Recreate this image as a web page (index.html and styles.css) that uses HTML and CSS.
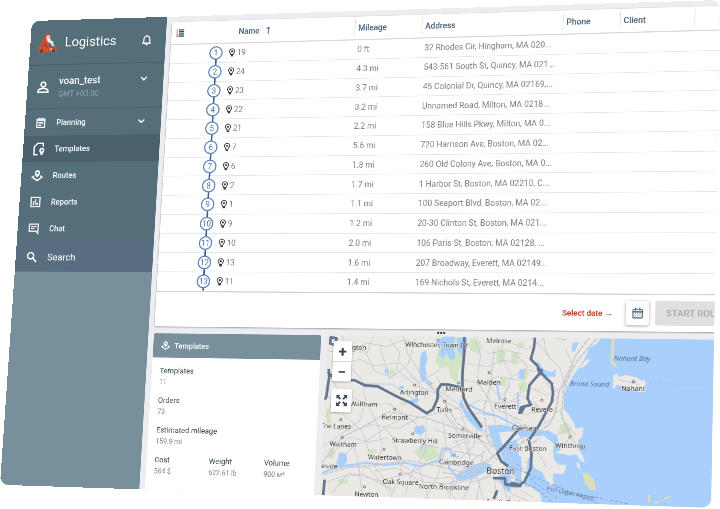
FILE: index.html
```html
<!DOCTYPE html>
<html lang="en">
<head>
  <meta charset="UTF-8">
  <meta name="viewport" content="width=device-width, initial-scale=1">
  <title>Logistics</title>
  <link rel="stylesheet" href="styles.css">
</head>
<body>
  <!-- icons -->
  <svg class="sprite" aria-hidden="true">
    <symbol id="i-chevron" viewBox="0 0 24 24"><path d="M4 8l8 8 8-8" fill="none" stroke="currentColor" stroke-width="3.600"/></symbol>
    <symbol id="i-bell" viewBox="0 0 24 24"><path d="M12 2.500v2M6 18v-7.500a6 6 0 0 1 12 0V18M3.500 18.500h17" fill="none" stroke="currentColor" stroke-width="2.400"/><path d="M9.500 20.500h5a2.500 2.500 0 0 1-5 0z" fill="currentColor"/></symbol>
    <symbol id="i-person" viewBox="0 0 24 24"><circle cx="12" cy="7.500" r="4" fill="none" stroke="currentColor" stroke-width="2.800"/><path d="M3.500 20.500v-2.500c0-2.500 4.500-4 8.500-4s8.500 1.500 8.500 4v2.500z" fill="none" stroke="currentColor" stroke-width="2.800"/></symbol>
    <symbol id="i-plan" viewBox="0 0 24 24"><path d="M4 5h16v16.500H4z" fill="none" stroke="currentColor" stroke-width="2.400"/><path d="M4 7.500h16M8 2v4M12 2v4M16 2v4M7 11.500h10M7 14.500h10M7 17.500h6" fill="none" stroke="currentColor" stroke-width="2"/></symbol>
    <symbol id="i-template" viewBox="0 0 24 24"><path d="M10 21.500H3.500V8L9 2.500h10V8" fill="none" stroke="currentColor" stroke-width="2.400"/><path d="M17 10a4.500 4.500 0 0 1 4.500 4.500c0 2.500-2 3.500-2.500 5.500v2h-4v-2c-.5-2-2.500-3-2.500-5.500A4.500 4.500 0 0 1 17 10zm0 2.800a1.700 1.700 0 1 0 0 3.400 1.700 1.700 0 0 0 0-3.400z" fill="currentColor"/></symbol>
    <symbol id="i-route" viewBox="0 0 24 24"><path d="M12 1.500a5.500 5.500 0 0 1 5.500 5.500c0 4-5.500 9-5.500 9S6.500 11 6.500 7A5.500 5.500 0 0 1 12 1.500zm0 3.300a2.200 2.200 0 1 0 0 4.400 2.200 2.200 0 0 0 0-4.400z" fill="currentColor"/><path d="M6 12.500L2 15.500l10 6.500 10-6.500-4-3" fill="none" stroke="currentColor" stroke-width="2.800"/></symbol>
    <symbol id="i-report" viewBox="0 0 24 24"><path d="M3 3h18v18H3z" fill="none" stroke="currentColor" stroke-width="2.400"/><path d="M8 10v8M16 13v5" stroke="currentColor" stroke-width="2.800"/><path d="M12 6v12" stroke="#e6e08a" stroke-width="2.800"/></symbol>
    <symbol id="i-chat" viewBox="0 0 24 24"><path d="M3 3h18v18.500L17 17H3z" fill="none" stroke="currentColor" stroke-width="2.400"/><path d="M6.500 8h11M6.500 12h7" stroke="currentColor" stroke-width="2.200"/></symbol>
    <symbol id="i-search" viewBox="0 0 24 24"><circle cx="9.500" cy="9.500" r="6.200" fill="none" stroke="currentColor" stroke-width="2.800"/><path d="M14 14l7.500 7.500" stroke="currentColor" stroke-width="3.200"/></symbol>
    <symbol id="i-list" viewBox="0 0 16 16"><path d="M1 2.500h3M1 6.200h3M1 9.900h3M1 13.600h3" stroke="#c0736a" stroke-width="2.200"/><path d="M5 2.500h10M5 6.200h10M5 9.900h10M5 13.600h10" stroke="#37474f" stroke-width="2.200"/></symbol>
    <symbol id="i-sort" viewBox="0 0 10 16"><path d="M5 15V2M2 5l3-3 3 3" fill="none" stroke="currentColor" stroke-width="1.800"/></symbol>
    <symbol id="i-pin" viewBox="0 0 12 16"><path d="M6 1.200a4.600 4.600 0 0 1 4.600 4.600c0 2.400-2.300 3.400-2.600 6H4c-.3-2.600-2.600-3.600-2.600-6A4.600 4.600 0 0 1 6 1.200z" fill="none" stroke="currentColor" stroke-width="1.500"/><circle cx="6" cy="5.800" r="1.900" fill="currentColor"/><path d="M4 13.900h4" stroke="currentColor" stroke-width="2.400"/></symbol>
    <symbol id="i-calendar" viewBox="0 0 24 24"><rect x="3" y="4.500" width="18" height="17" rx="2" fill="none" stroke="currentColor" stroke-width="2"/><path d="M3 9.500h18M8 1.500v5M16 1.500v5" stroke="currentColor" stroke-width="2.400"/><path d="M6.500 13.500h11M6.500 17.500h11" stroke="currentColor" stroke-width="1.800" stroke-dasharray="2 2.500"/></symbol>
    <symbol id="i-expand" viewBox="0 0 24 24"><path d="M2 2h7L6.700 4.300l4 4-2.400 2.400-4-4L2 9zM22 2v7l-2.300-2.300-4 4-2.400-2.400 4-4L15 2zM2 22v-7l2.300 2.300 4-4 2.400 2.400-4 4L9 22zM22 22h-7l2.300-2.300-4-4 2.400-2.400 4 4L22 15z" fill="currentColor"/></symbol>
  </svg>

  <div class="stage">
  <div class="app">
    <aside class="sidebar">
      <header class="brand">
        <svg class="brand-logo" viewBox="0 0 36 36" aria-hidden="true">
          <path d="M1 32l1-8 3-3 2-7 3-5 6 1 3 4 2 9 1 7 5-1 4-5 4 2 1 7-3 3H2z" fill="#cc5233"/>
          <path d="M10 4l7-3 6 3-1 4-10 2z" fill="#c64a32"/>
          <circle cx="18" cy="8" r="4" fill="#e9c3ae"/>
          <path d="M15 11l6-1 4 5 4 2-1 3 3 4-4 1-4-6-5-2z" fill="#e9edf0"/>
          <path d="M5 24h10M10 16l8 11" stroke="#a93c27" stroke-width="2"/>
          <circle cx="7" cy="33" r="3" fill="#7c3428"/><circle cx="30" cy="33" r="3" fill="#7c3428"/>
          <circle cx="25" cy="30" r="2" fill="#d8d860"/>
        </svg>
        <span class="brand-name">Logistics</span>
        <button class="icon-btn" aria-label="Notifications"><svg class="icon"><use href="#i-bell"/></svg></button>
      </header>
      <div class="user">
        <svg class="icon icon-lg"><use href="#i-person"/></svg>
        <div class="user-info">
          <div class="user-name">voan_test</div>
          <div class="user-zone">GMT +03:00</div>
        </div>
        <button class="icon-btn user-toggle" aria-label="Account menu"><svg class="icon icon-sm"><use href="#i-chevron"/></svg></button>
      </div>
      <nav class="menu">
        <a class="menu-item" href="#"><svg class="icon"><use href="#i-plan"/></svg><span>Planning</span><svg class="icon icon-sm menu-arrow"><use href="#i-chevron"/></svg></a>
        <a class="menu-item active" href="#"><svg class="icon icon-lg"><use href="#i-template"/></svg><span>Templates</span></a>
        <a class="menu-item" href="#"><svg class="icon"><use href="#i-route"/></svg><span>Routes</span></a>
        <a class="menu-item" href="#"><svg class="icon"><use href="#i-report"/></svg><span>Reports</span></a>
        <a class="menu-item" href="#"><svg class="icon"><use href="#i-chat"/></svg><span>Chat</span></a>
        <a class="menu-item search" href="#"><svg class="icon"><use href="#i-search"/></svg><span>Search</span></a>
      </nav>
    </aside>

    <main class="main">
      <section class="orders">
        <table class="orders-table">
          <colgroup>
            <col class="col-name"><col class="col-mileage"><col class="col-address"><col class="col-phone"><col class="col-client"><col>
          </colgroup>
          <thead>
            <tr>
              <th><div class="name-head"><svg class="list-icon"><use href="#i-list"/></svg><span>Name</span><svg class="sort"><use href="#i-sort"/></svg></div></th>
              <th>Mileage</th>
              <th>Address</th>
              <th>Phone</th>
              <th>Client</th>
              <th></th>
            </tr>
          </thead>
          <tbody>
            <tr><td><div class="stop"><span class="num">1</span><svg class="pin"><use href="#i-pin"/></svg>19</div></td><td>0 ft</td><td>32 Rhodes Cir, Hingham, MA 020...</td><td></td><td></td><td></td></tr>
            <tr><td><div class="stop"><span class="num">2</span><svg class="pin"><use href="#i-pin"/></svg>24</div></td><td>4.3 mi</td><td>543-561 South St, Quincy, MA 021...</td><td></td><td></td><td></td></tr>
            <tr><td><div class="stop"><span class="num">3</span><svg class="pin"><use href="#i-pin"/></svg>23</div></td><td>3.7 mi</td><td>45 Colonial Dr, Quincy, MA 02169,...</td><td></td><td></td><td></td></tr>
            <tr><td><div class="stop"><span class="num">4</span><svg class="pin"><use href="#i-pin"/></svg>22</div></td><td>3.2 mi</td><td>Unnamed Road, Milton, MA 0218...</td><td></td><td></td><td></td></tr>
            <tr><td><div class="stop"><span class="num">5</span><svg class="pin"><use href="#i-pin"/></svg>21</div></td><td>2.2 mi</td><td>158 Blue Hills Pkwy, Milton, MA 0...</td><td></td><td></td><td></td></tr>
            <tr><td><div class="stop"><span class="num">6</span><svg class="pin"><use href="#i-pin"/></svg>7</div></td><td>5.6 mi</td><td>720 Harrison Ave, Boston, MA 02...</td><td></td><td></td><td></td></tr>
            <tr><td><div class="stop"><span class="num">7</span><svg class="pin"><use href="#i-pin"/></svg>6</div></td><td>1.8 mi</td><td>260 Old Colony Ave, Boston, MA 0...</td><td></td><td></td><td></td></tr>
            <tr><td><div class="stop"><span class="num">8</span><svg class="pin"><use href="#i-pin"/></svg>2</div></td><td>1.7 mi</td><td>1 Harbor St, Boston, MA 02210, C...</td><td></td><td></td><td></td></tr>
            <tr><td><div class="stop"><span class="num">9</span><svg class="pin"><use href="#i-pin"/></svg>1</div></td><td>1.1 mi</td><td>100 Seaport Blvd, Boston, MA 02...</td><td></td><td></td><td></td></tr>
            <tr><td><div class="stop"><span class="num">10</span><svg class="pin"><use href="#i-pin"/></svg>9</div></td><td>1.2 mi</td><td>20-30 Clinton St, Boston, MA 021...</td><td></td><td></td><td></td></tr>
            <tr><td><div class="stop"><span class="num">11</span><svg class="pin"><use href="#i-pin"/></svg>10</div></td><td>2.0 mi</td><td>106 Paris St, Boston, MA 02128, ...</td><td></td><td></td><td></td></tr>
            <tr><td><div class="stop"><span class="num">12</span><svg class="pin"><use href="#i-pin"/></svg>13</div></td><td>1.6 mi</td><td>207 Broadway, Everett, MA 02149...</td><td></td><td></td><td></td></tr>
            <tr><td><div class="stop"><span class="num">13</span><svg class="pin"><use href="#i-pin"/></svg>11</div></td><td>1.4 mi</td><td>169 Nichols St, Everett, MA 0214...</td><td></td><td></td><td></td></tr>
          </tbody>
        </table>
        <footer class="orders-footer">
          <span class="hint">Select date →</span>
          <button class="date-btn" aria-label="Select date"><svg class="icon"><use href="#i-calendar"/></svg></button>
          <button class="start-btn" disabled>START ROUTE</button>
        </footer>
      </section>

      <div class="splitter"><i></i><i></i><i></i></div>

      <div class="bottom">
        <section class="card">
          <h2 class="card-title"><svg class="icon icon-sm"><use href="#i-route"/></svg>Templates</h2>
          <dl class="stats">
            <div class="wide"><dt>Templates</dt><dd>11</dd></div>
            <div class="wide"><dt>Orders</dt><dd>73</dd></div>
            <div class="wide"><dt>Estimated mileage</dt><dd>159.9 mi</dd></div>
            <div><dt>Cost</dt><dd>564 $</dd></div>
            <div><dt>Weight</dt><dd>622.61 lb</dd></div>
            <div><dt>Volume</dt><dd>900 м³</dd></div>
          </dl>
        </section>

        <section class="map">
          <svg class="map-canvas" viewBox="0 0 700 270" preserveAspectRatio="xMinYMin slice" role="img" aria-label="Map of Boston">
            <!-- west side -->
            <g transform="matrix(.56 -.004 .0167 .547 -27.7 -25)">
              <g class="park">
                <path d="M415 50l50 0-5 40 5 40-20 20-5 40-20-20-5-30-25 5-15-20 10-40 15-5z"/>
                <path d="M480 55l25 5 10 20-10 20-20-5-10-20zM560 75l25 20-5 30-15 10-10-20zM600 95l20 0 0 40-20-5zM330 110l10-5 0 70-10 5zM240 150l15 0 0 20-15-2zM150 85l20 5-5 12-20-2zM50 270l15 20 0 30-15 0zM330 385l40-10 15 20-15 22-40 2-15-20zM60 395l20 5-5 25-20-5zM570 165l20 10-5 25-20-5z"/>
                <path d="M270 250l20-5 10 12-20 5zM175 395l25 0 5 10-25 4zM85 490l30-5 5 15-30 5zM340 420l50-20 10 12-50 18z"/>
              </g>
              <g class="water">
                <path d="M335 98l12-6 6 22-6 28 4 40-14 8-8-30 2-40z"/>
                <path d="M380 60l25-12 30 0-6 30 8 35-14 10-14-25-10 20-12-14 8-25-15-5zM440 52l30 0 0 28-14 30-14-20z"/>
                <path d="M300 245l25-10 5 10-25 14zM315 325l28-6 6 18-16 12-18-6zM225 150l12 0 0 14-12-2zM90 405l22 5 4 22-20 26-12-16zM452 235l12 30 30 30 24 34-8 8-36-34-26-48z"/>
                <path d="M440 470l40-30 40-14 26 10-18 20-40 20-48 8zM530 318l40-4 60 10 0 12-40-2-25 4 10 40-12 20-16-30zM575 372l55-20v50l-40 22-18-16zM560 470l20-10 50 0 0 60-40-6-20-24zM570 395l60 0 0 70-40 0z"/>
                <path d="M350 180l20 10-6 10-18-10zM270 200l14 2-2 10-14-2z"/>
              </g>
              <path class="river" d="M40 470l50-20 80-14 60 6 60-8 40 10 60-20 10-36 20 0 8 22 20 4M345 370l-12 24M440 470l-18-20-10-30M465 250l60 30 30 6 80 40M555 180l12 60M620 215l0 50"/>
              <g class="street">
                <path d="M50 95l60 5 60-30 60 10 50-20 90 20M95 45l20 90 50 60 80 0 60 40 40 45M190 45l-20 60 25 50 50 20 50-40 20-80M50 240l60-10 70 30 60-5 80 60 30 70M160 200l10 50-20 60-80 60-35 20M110 130l40-10 40 20 80-10 50 50 30 60M240 60l30 40-10 50 60 50 80 30M280 45l15 60 60 90 80 50 60 50 50 90"/>
                <path d="M50 330l70 10 70-20 80 10 50-30 70-20 80-20M60 420l60-60 50 10 60-40 30 40 60 0 80 20 120 20M180 270l30 60 10 60-20 60 40 50 10 40M130 370l20 70 10 90M45 500l80-30 90 20 100-30 60 20 80-10M250 420l60 40 60-30 80 10M70 530l40-50 50-10 100 50M290 530l20-70 40-60 0-100M350 540l40-80 20-80-10-80M420 540l10-60 60-60 40-30M460 540l30-70 60-60M500 540l10-60 50-30M200 460l60-10 80 40 90 5 70-20"/>
                <path d="M470 130l60 10 40-20 60 5M490 45l20 60-10 80 40 60 20 90M580 45l-10 60 30 60-20 70 10 90M460 180l50 10 50-20 70 10M470 260l40-20 60 10 60-10M530 100l60-10 40 10M440 300l60-20 60 10M380 170l30 60 0 60 40 60M390 150l-60 40-30-20M410 250l40 20 20 60 10 80"/>
                <path d="M430 370l60-20 60 30M400 400l60-30 70 0M450 420l40-40 10-50M370 330l60 20 30 50M480 420l-20-80-60-60M520 390l-10 60-40 30-50 10M480 490l60-20 40 20M520 540l-20-70M560 540l-10-80M590 540l-20-70M600 190l-40 60M540 200l50 60 40 10M50 150l30 60-30 90M210 80l30 100M100 290l60 50 20 60M300 290l-80 40M260 380l20 80-30 70M330 450l30 90M120 450l60 0 60 70M390 490l50 50M80 440l60-60 100-20"/>
              </g>
              <path class="rail" d="M38 440l60-80 60-30 80-50 120 20 90 30 70 20M45 475l80-26 70-6 100-16 90 14 80 20M350 190l50 50 40 70 60 40 60 70M550 90l-10 100-20 80 10 80 40 60M560 270l70 30M520 330l60 60 50 90M400 460l60 10 100-70M430 430l60 20 70 0"/>
              <g class="highway">
                <path d="M55 150l2 25-8 60-4 10M52 160l18 18 35 6 28 0 32 16 40 3 30 16 35 18 32 14 50 32 18-12 14-34 0-26 10-16 20 0 40 8M462 45l0 50-5 60 0 50 4 30 14 30 40 58M48 490l-4 50"/>
                <path d="M630 320l-14 14-36 44-20 22 12 24 20 14M548 474l34 0 2 18 46 6M560 510l-10 26M640 255l-12 25"/>
                <path d="M60 52l18 4-6 20-14-4z"/>
              </g>
            </g>
            <!-- east side -->
            <g transform="matrix(.53 -.0035 .0167 .537 307.300 -28.500)">
              <g class="park">
                <path d="M15 75l20-10 8 12-16 14zM30 160l20-6 8 10-14 22-20-2zM22 195l26-6 4 24-24 8zM150 320l20-8 18 16-10 20-30 0z"/>
              </g>
              <path class="water" d="M285 44L262 72l-22 12-6 16-10 22-14 20-22 34-14 22-10 26-2 46 18 22 12 20 6 18 24-4-4 28-12 12 0 26 12 18 8 22-14-4-12-20-20 4-24-8-10-30-4-22-26-14-30 0-20 18 34-4 28 22 4 52 16 14 22 0-6 24-32-6-4 26 6 20-16-4-20-36-22-10-22-40-4 40-4 50-20 24-30 12v24l60 4 40 12 10 40 700 60V30z"/>
              <g class="land">
                <path d="M312 168l12-6 6 10 20-6 30 6 16 10 12 0 0 34-24 0-30-12-30-8-12 14zM20 370l34-18 40 6 20 14-34 30-14 22-40-8zM66 380l26 18 28-26 12 6-8 60 38 4-2 26-34-2-4 26-8 6-24-46-24-24zM0 514l60-6 30 20 6 30-96 6zM0 470l16 10-6 16-10 0zM140 402l20-8 30 6-4 10-44-4zM200 428l10 10 0 16-8-8zM232 118l12 2-16 20-20 8z"/>
              </g>
              <path class="sand" d="M308 46l10 0-2 40-4 40 12 8-4 8-16-10zM218 462l22 4 14 20 4 28-16 0-18-22zM413 524l8 0-2 22-6 0zM434 542l14 2-6 6-12-2zM460 532l16-6 4 4-20 8z"/>
              <path class="water" d="M80 120l20 30 26 10 14-12-4 26-20 0-30-14zM190 70l20-4-14 30-10 0zM20 345l40-14 50 10-20 14-60 6zM28 150l16 4-6 26-14 0z"/>
              <g class="street">
                <path d="M0 70l50 20 60-40 60 10M0 180l40-30 50 10 40 60M100 45l10 60 40 40 20 60M10 230l60-20 40 20 40-20M0 250l30-20 60 40 60 10M40 290l60-10 40-40M150 270l20 60 30 50M0 340l40-20 40 10 50-30 10-40M10 100l40 40-20 80M140 350l40-20 20 20M60 380l30-20M160 380l30-30M20 400l60-30M40 430l30 20M75 250l30 60M170 90l20 50-30 60"/>
                <path d="M0 300l30 20 10 50M60 50l60 60M30 520l40 20M0 530l50 20M110 450l-30-50M326 180l50 10 20 12"/>
              </g>
              <path class="rail wide" d="M242 50l-44 60-50 110-10 60-20 40-60 40-58 40M262 56l-60 70-40 80-6 90 30 60"/>
              <path class="ferry" d="M0 450l90 34 80 36 140 24 50 10M20 440l60 60 60 40M0 480l80 34 50 44M130 500l140 56"/>
              <path class="ferry light" d="M418 190l200 4"/>
              <g class="highway">
                <path d="M76 44l-4 40-10 36 20 20 10 20-34 40-6 40 10 20-30 8-6 20M92 160l34 34 4 30-4 26-40 74-30 44 8 40-2 44-20 42-14 10-28-6"/>
                <path d="M84 150l12 4-4 12z"/>
              </g>
            </g>

            <g class="dots">
              <circle cx="188" cy="6" r="2"/><circle cx="275" cy="59" r="2"/><circle cx="225" cy="77" r="2"/><circle cx="152" cy="82" r="2"/><circle cx="302" cy="103" r="2"/><circle cx="203" cy="108" r="2"/><circle cx="120" cy="123" r="2"/><circle cx="235" cy="153" r="2"/><circle cx="34" cy="172" r="2"/><circle cx="152" cy="163" r="2"/><circle cx="105" cy="190" r="2"/><circle cx="222" cy="196" r="2"/><circle cx="30" cy="142" r="2"/><circle cx="134" cy="230" r="2"/><circle cx="362" cy="103" r="2"/><circle cx="343" cy="168" r="2"/><circle cx="409" cy="162" r="2"/><circle cx="508" cy="70" r="2"/><circle cx="75" cy="253" r="2"/>
            </g>
            <g class="labels">
              <text x="186" y="18">Winchester, Town Of</text>
              <text x="289" y="10">Melrose</text>
              <text x="68" y="24" class="end">Lexington</text>
              <text x="275" y="79">Malden</text>
              <text x="226" y="91">Medford</text>
              <text x="152" y="98">Arlington</text>
              <text x="303" y="118">Everett</text>
              <text x="203" y="126">Tufts</text>
              <text x="91" y="119" class="end">Waltham</text>
              <text x="121" y="140">Belmont</text>
              <text x="48" y="157" class="end">The Lanes</text>
              <text x="156" y="178">Strawberry Hill</text>
              <text x="238" y="168">Somerville</text>
              <text x="36" y="187">Waltham</text>
              <text x="107" y="207">Watertown</text>
              <text x="226" y="212">Cambridge</text>
              <text x="28" y="224" class="end">Lakeside</text>
              <text x="299" y="225" class="city">Boston</text>
              <text x="135" y="247">Oak Square</text>
              <text x="207" y="253">North Brookline</text>
              <text x="79" y="269">Newton</text>
              <text x="312" y="275">South Boston</text>
              <text x="335" y="153">Chelsea</text>
              <text x="342" y="186">East Boston</text>
              <text x="363" y="122">Revere</text>
              <text x="410" y="180">Winthrop</text>
              <text x="508" y="85">Nahant</text>
              <text x="505" y="36" class="bay">Nahant Bay</text>
              <text x="438" y="79" class="bay">Broad Sound</text>
              <text x="412" y="256" class="route" transform="rotate(11 412 256)">Hull-Logan Airport</text>
            </g>
          </svg>
          <div class="map-controls">
            <div class="zoom">
              <button aria-label="Zoom in">+</button>
              <button aria-label="Zoom out">−</button>
            </div>
            <button class="expand" aria-label="Fit map"><svg class="icon"><use href="#i-expand"/></svg></button>
          </div>
        </section>
      </div>
    </main>
  </div>
  </div>
</body>
</html>
```

FILE: styles.css
```css
* {
  box-sizing: border-box;
  margin: 0;
  padding: 0;
}

body {
  background: #fff;
  font-family: Roboto, "Liberation Sans", sans-serif;
  font-size: 14px;
  color: #37474f;
}

button {
  border: none;
  background: none;
  font: inherit;
  color: inherit;
  cursor: pointer;
}

.sprite {
  position: absolute;
  width: 0;
  height: 0;
}

.stage {
  height: 100vh;
  overflow: hidden;
}

/* the whole window is shown in perspective */
.app {
  display: flex;
  width: calc(100vw * 5 / 3);
  overflow: hidden;
  border-radius: 15px;
  background: #ecedf1;
  transform-origin: 0 0;
  transform: matrix3d(0.522275, -0.0175, 0, -0.000070917, -0.0384, 0.53735, 0, -0.00004011, 0, 0, 1, 0, 32, 21, 0, 1);
}

.icon {
  display: block;
  flex: none;
  width: 22px;
  height: 22px;
}

.icon-lg {
  width: 26px;
  height: 26px;
}

.icon-sm {
  width: 16px;
  height: 16px;
}

/* sidebar */
.sidebar {
  flex: none;
  width: 253px;
  background: #78909c;
  color: #fff;
}

.brand {
  display: flex;
  align-items: center;
  height: 83px;
  padding: 0 24px 0 15px;
  background: #546e7a;
  border-bottom: 2px solid #4b626e;
}

.brand-logo {
  width: 36px;
  height: 36px;
  margin-right: 14px;
}

.brand-name {
  flex: 1;
  font-size: 24px;
}

.user {
  display: flex;
  align-items: center;
  gap: 16px;
  height: 81px;
  padding: 0 28px 0 17px;
  background: #546e7a;
  border-bottom: 2px solid #4b626e;
}

.user-info {
  flex: 1;
}

.user-name {
  font-size: 18px;
  font-weight: 500;
  line-height: 26px;
}

.user-zone {
  line-height: 22px;
  color: #95a7b0;
}

.user-toggle {
  align-self: flex-start;
  padding-top: 20px;
}

.menu-item {
  display: grid;
  grid-template-columns: 26px 1fr 16px;
  align-items: center;
  justify-items: start;
  column-gap: 16px;
  height: 48px;
  padding: 0 28px 0 17px;
  background: #546e7a;
  color: #fff;
  font-weight: 500;
  text-decoration: none;
}

.menu-item .icon {
  justify-self: center;
}

.menu-item.active {
  background: #4b606d;
}

.menu-item.search {
  height: 53px;
  background: #586d80;
  font-size: 17px;
  font-weight: 400;
}

/* table of stops */
.main {
  flex: none;
  width: calc(100% - 186px);
  padding: 10px 0 0 10px;
}

.orders {
  margin-right: 10px;
  background: #fff;
  border-radius: 3px;
  box-shadow: 0 1px 3px rgba(0, 0, 0, .4);
}

.orders-table {
  width: 100%;
  height: 482px;
  table-layout: fixed;
  border-collapse: collapse;
  border-bottom: 2px solid #d0d3d6;
}

.col-name {
  width: 328px;
}

.col-mileage {
  width: 116px;
}

.col-address {
  width: 238px;
}

.col-phone {
  width: 94px;
}

.col-client {
  width: 121px;
}

.orders-table th {
  height: 41px;
  padding: 0 6px;
  border-bottom: 2px solid #d6d8da;
  font-weight: 500;
  color: #46607a;
  text-align: left;
  background: linear-gradient(#cfd3d6, #cfd3d6) 0 50% / 1px 28px no-repeat;
}

.orders-table th:first-child {
  padding: 0;
  background: none;
}

.name-head {
  display: grid;
  grid-template-columns: 114px 48px auto;
  align-items: center;
  justify-content: start;
  padding-left: 8px;
}

.list-icon {
  width: 16px;
  height: 16px;
}

.sort {
  width: 10px;
  height: 16px;
  color: #6b8292;
}

.orders-table td {
  padding: 0 6px;
  border-bottom: 1px solid #e0e2e4;
  color: #7c8084;
  white-space: nowrap;
}

.stop {
  display: flex;
  align-items: center;
  padding-left: 65px;
}

.num {
  position: relative;
  width: 24px;
  height: 24px;
  margin-right: 11px;
  border: 2px solid #5a82b6;
  border-radius: 50%;
  background: #fff;
  color: #4f78ae;
  line-height: 20px;
  text-align: center;
}

/* link to the next stop */
.num::after {
  content: "";
  position: absolute;
  left: 9px;
  top: 22px;
  width: 3px;
  height: 10px;
  background: #3c5f8d;
}

tr:last-child .num::after {
  height: 4px;
}

.pin {
  width: 12px;
  height: 16px;
  margin-right: 3px;
  color: #333;
}

.orders-footer {
  display: flex;
  align-items: center;
  justify-content: flex-end;
  height: 60px;
  padding: 0 10px;
}

.hint {
  margin-right: 21px;
  font-size: 13px;
  font-weight: 500;
  color: #c62f1c;
}

.date-btn {
  display: grid;
  place-items: center;
  width: 37px;
  height: 40px;
  margin-right: 10px;
  border-radius: 3px;
  background: #fff;
  box-shadow: 0 1px 4px rgba(0, 0, 0, .4);
  color: #455a6e;
}

.date-btn .icon {
  width: 20px;
  height: 20px;
}

.start-btn {
  width: 140px;
  height: 40px;
  padding-left: 17px;
  border-radius: 3px;
  background: #e0e0e0;
  color: #a8a8a8;
  font-size: 15px;
  font-weight: 500;
  text-align: left;
}

.splitter {
  display: flex;
  align-items: center;
  justify-content: center;
  gap: 1px;
  height: 12px;
  margin-right: 10px;
}

.splitter i {
  width: 4px;
  height: 4px;
  border-radius: 50%;
  background: #333;
}

/* summary card */
.bottom {
  display: flex;
  gap: 10px;
}

.card {
  flex: none;
  width: 294px;
  background: #fff;
  border-radius: 3px 3px 0 0;
}

.card-title {
  display: flex;
  align-items: center;
  gap: 8px;
  height: 42px;
  padding: 0 14px;
  border-radius: 3px 3px 0 0;
  background: #78909c;
  color: #fff;
  font-size: 13px;
  font-weight: 500;
}

.stats {
  display: grid;
  grid-template-columns: 96px 96px 1fr;
  row-gap: 13px;
  padding: 13px 0 0 14px;
}

.stats .wide {
  grid-column: 1 / -1;
}

.stats dt {
  font-size: 13px;
  line-height: 20px;
}

.stats dd {
  font-size: 12px;
  line-height: 18px;
  color: #7c8084;
}

/* map */
.map {
  position: relative;
  flex: 1;
  overflow: hidden;
  background: #ebe9e5;
}

.map-canvas {
  display: block;
  width: 100%;
  height: 269px;
}

.park {
  fill: #d2e4c4;
}

.water {
  fill: #a9d0fd;
}

.land {
  fill: #ebe9e5;
}

.sand {
  fill: #d8dfb4;
}

.river {
  fill: none;
  stroke: #a9d0fd;
  stroke-width: 6;
}

.street {
  fill: none;
  stroke: #c4c4cf;
  stroke-width: 2;
  stroke-linejoin: round;
}

.rail {
  fill: none;
  stroke: #c9c9cd;
  stroke-width: 4;
  stroke-dasharray: 14 3;
}

.rail.wide {
  stroke: #c2c6c8;
}

.ferry {
  fill: none;
  stroke: #8197b8;
  stroke-width: 2;
  stroke-dasharray: 9 6;
}

.ferry.light {
  stroke: #9dc0ea;
}

.highway {
  fill: none;
  stroke: #64768f;
  stroke-width: 8;
  stroke-linejoin: round;
}

.dots {
  fill: #ebe9e5;
  stroke: #555;
}

.labels {
  font-family: "Noto Sans", sans-serif;
  font-size: 11px;
  fill: #3a3a3a;
  stroke: #f2f0ec;
  stroke-width: 1px;
  paint-order: stroke;
  text-anchor: middle;
}

.labels .end {
  text-anchor: end;
}

.labels .city {
  font-size: 14px;
}

.labels .bay {
  font-style: italic;
  fill: #5a6f8c;
  stroke: none;
}

.labels .route {
  font-size: 9px;
  fill: #5a6f8c;
  stroke: none;
}

.map-controls {
  position: absolute;
  left: 12px;
  top: 10px;
}

.zoom {
  display: grid;
  width: 32px;
  margin-bottom: 12px;
  border-radius: 3px;
  background: #fff;
  box-shadow: 0 1px 3px rgba(0, 0, 0, .4);
}

.zoom button {
  height: 34px;
  color: #37474f;
  font-size: 26px;
  font-weight: 700;
  line-height: 34px;
}

.zoom button + button {
  border-top: 1px solid #ccc;
}

.expand {
  display: grid;
  place-items: center;
  width: 35px;
  height: 40px;
  border-radius: 4px;
  background: #fff;
  box-shadow: 0 1px 3px rgba(0, 0, 0, .4);
}
```
